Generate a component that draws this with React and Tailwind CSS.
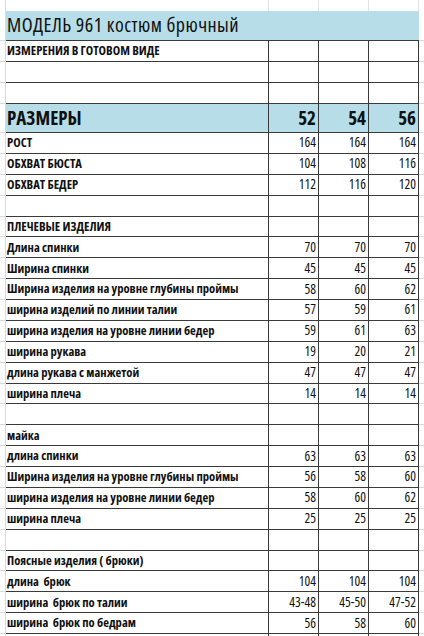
import React from "react";

const ROWS = [
  { t: "РОСТ", v: ["164", "164", "164"] },
  { t: "ОБХВАТ БЮСТА", v: ["104", "108", "116"] },
  { t: "ОБХВАТ БЕДЕР", v: ["112", "116", "120"] },
  { t: "" },
  { t: "ПЛЕЧЕВЫЕ ИЗДЕЛИЯ" },
  { t: "Длина спинки", v: ["70", "70", "70"] },
  { t: "Ширина спинки", v: ["45", "45", "45"] },
  { t: "Ширина изделия на уровне глубины проймы", v: ["58", "60", "62"] },
  { t: "ширина изделий по линии талии", v: ["57", "59", "61"] },
  { t: "ширина изделия на уровне линии бедер", v: ["59", "61", "63"] },
  { t: "ширина рукава", v: ["19", "20", "21"] },
  { t: "длина рукава с манжетой", v: ["47", "47", "47"] },
  { t: "ширина плеча", v: ["14", "14", "14"] },
  { t: "" },
  { t: "майка" },
  { t: "длина спинки", v: ["63", "63", "63"] },
  { t: "Ширина изделия на уровне глубины проймы", v: ["56", "58", "60"] },
  { t: "ширина изделия на уровне линии бедер", v: ["58", "60", "62"] },
  { t: "ширина плеча", v: ["25", "25", "25"] },
  { t: "" },
  { t: "Поясные изделия ( брюки)" },
  { t: "длина  брюк", v: ["104", "104", "104"] },
  { t: "ширина  брюк по талии", v: ["43-48", "45-50", "47-52"] },
  { t: "ширина  брюк по бедрам", v: ["56", "58", "60"] },
];

function Row({ hCls, label, vals, labelCls = "", valCls = "", blue = false }) {
  const bg = blue ? "bg-[#b7dee8]" : "bg-white";
  return (
    <div className={`flex ${hCls}`}>
      <div className="w-[6px] shrink-0 border-r border-b border-[#dadada]" />
      <div
        className={`w-[262px] shrink-0 border-b border-[#3a3a3a] flex items-end pl-[1px] pb-[3px] whitespace-pre ${bg} ${labelCls}`}
      >
        {label}
      </div>
      {[0, 1, 2].map((i) => (
        <div
          key={i}
          className={`${i === 2 ? "w-[51px] border-r" : "w-[50px]"} shrink-0 border-l border-b border-[#3a3a3a] flex items-end justify-end pr-[2px] pb-[3px] ${bg} ${valCls}`}
        >
          {vals ? vals[i] : ""}
        </div>
      ))}
      <div className="flex-1 border-b border-[#dadada]" />
    </div>
  );
}

export default function App() {
  return (
    <div className="w-[424px] h-[636px] overflow-hidden bg-white text-[#111] font-['Open_Sans',sans-serif] font-stretch-[75%]">
      <div className="flex h-[11px]">
        <div className="w-[6px] shrink-0 border-r border-[#dadada]" />
        <div className="w-[262px] shrink-0" />
        <div className="w-[50px] shrink-0 border-l border-[#e3e3e3]" />
        <div className="w-[50px] shrink-0 border-l border-[#e3e3e3]" />
        <div className="w-[51px] shrink-0 border-l border-r border-[#e3e3e3]" />
        <div className="flex-1" />
      </div>
      <div className="flex h-[30px]">
        <div className="w-[6px] shrink-0 border-r border-b border-[#dadada]" />
        <div className="w-[413px] shrink-0 bg-[#b7dee8] border-b border-[#3a3a3a] flex items-end pl-[1px] pb-[5px] text-[20px] font-medium tracking-[0.45px] leading-none whitespace-pre">
          МОДЕЛЬ 961 костюм брючный
        </div>
        <div className="flex-1 border-b border-[#dadada]" />
      </div>
      <Row hCls="h-[21px]" label="ИЗМЕРЕНИЯ В ГОТОВОМ ВИДЕ" labelCls="text-[12.6px] font-bold leading-none" />
      <Row hCls="h-[21px]" />
      <Row hCls="h-[21px]" />
      <Row
        hCls="h-[29px]"
        blue
        label="РАЗМЕРЫ"
        vals={["52", "54", "56"]}
        labelCls="text-[19px] font-bold leading-none pb-[4px]"
        valCls="text-[19px] font-bold leading-none pb-[4px]"
      />
      {ROWS.map((r, i) => (
        <Row
          key={i}
          hCls="h-[20.875px]"
          label={r.t}
          vals={r.v}
          labelCls="text-[12.6px] font-bold leading-none"
          valCls="text-[13.5px] leading-none"
        />
      ))}
      <Row hCls="h-[21px]" />
    </div>
  );
}
